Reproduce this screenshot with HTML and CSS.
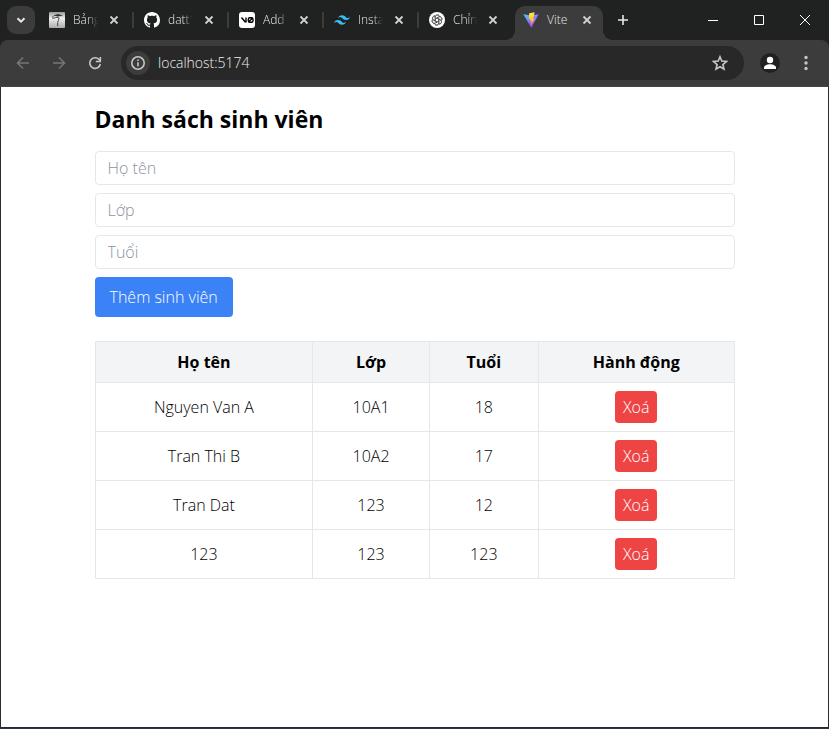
FILE: index.html
```html
<!DOCTYPE html>
<html lang="vi">
<head>
<meta charset="utf-8">
<title>Danh sách sinh viên</title>
<link rel="stylesheet" href="styles.css">
</head>
<body>
<div class="window">
  <header class="tabstrip">
    <button class="tab-search" aria-label="Search tabs"><svg width="12" height="12" viewBox="0 0 12 12"><path d="M2.500 4.200 6 7.700 9.500 4.200" fill="none" stroke="currentColor" stroke-width="2"/></svg></button>
    <nav class="tabs">
      <div class="tab">
        <svg class="favicon" viewBox="0 0 16 16"><defs><linearGradient id="paper" x2="0" y2="1"><stop stop-color="#999"/><stop offset=".4" stop-color="#eee"/><stop offset="1" stop-color="#aaa"/></linearGradient></defs><rect width="16" height="16" rx="1" fill="url(#paper)"/><path d="M4 3.500 9 2l5 1.500-5 1z" fill="#333"/><path d="M5 6.500c1.500-1.500 4-1.500 5.500 0M9.500 6.500c.6 2-.8 2.500-.8 4V14M4 4v3" fill="none" stroke="#444"/></svg>
        <span class="tab-title">Bảng</span>
        <button class="tab-close" aria-label="Close tab"><svg viewBox="0 0 16 16"><path d="m4.500 4.500 7 7m0-7-7 7"/></svg></button>
      </div>
      <div class="tab">
        <svg class="favicon" viewBox="0 0 16 16"><path fill="#fff" d="M8 0C3.580 0 0 3.580 0 8c0 3.540 2.290 6.530 5.470 7.590.4.070.55-.17.55-.38 0-.19-.01-.82-.01-1.490-2.010.37-2.530-.49-2.690-.94-.09-.23-.48-.94-.82-1.130-.28-.15-.68-.52-.01-.53.63-.01 1.080.58 1.230.82.72 1.210 1.870.87 2.330.66.07-.52.28-.87.51-1.070-1.780-.2-3.640-.89-3.640-3.950 0-.87.31-1.590.82-2.150-.08-.2-.36-1.020.08-2.120 0 0 .67-.21 2.200.82.64-.18 1.320-.27 2-.27s1.360.09 2 .27c1.530-1.040 2.200-.82 2.200-.82.44 1.100.16 1.920.08 2.120.51.56.82 1.270.82 2.150 0 3.070-1.870 3.750-3.650 3.950.29.25.54.73.54 1.480 0 1.070-.01 1.930-.01 2.200 0 .21.15.46.55.38A8 8 0 0 0 16 8c0-4.420-3.580-8-8-8z"/></svg>
        <span class="tab-title">datt1</span>
        <button class="tab-close" aria-label="Close tab"><svg viewBox="0 0 16 16"><path d="m4.500 4.500 7 7m0-7-7 7"/></svg></button>
      </div>
      <div class="tab">
        <svg class="favicon" viewBox="0 0 16 16"><rect width="16" height="16" rx="3" fill="#fff"/><path d="m2.500 5.500 3.500 4.300h1V5.500M9.800 5.800h2.700q1.500 0 1.500 1.500v1.400q0 1.500-1.500 1.500h-1.700q-1.500 0-1.500-1.500V7.300q0-1.500 1.500-1.500M9.500 10l4-4" fill="none" stroke="#000" stroke-width="1.400"/></svg>
        <span class="tab-title">Add</span>
        <button class="tab-close" aria-label="Close tab"><svg viewBox="0 0 16 16"><path d="m4.500 4.500 7 7m0-7-7 7"/></svg></button>
      </div>
      <div class="tab">
        <svg class="favicon" viewBox="0 0 24 24"><path fill="#38bdf8" d="M12 4.800c-3.200 0-5.200 1.600-6 4.800 1.200-1.600 2.600-2.200 4.200-1.800.913.228 1.565.89 2.288 1.624C13.666 10.618 15.027 12 18 12c3.200 0 5.200-1.600 6-4.800-1.200 1.600-2.600 2.200-4.200 1.800-.913-.228-1.565-.89-2.288-1.624C16.337 6.182 14.976 4.800 12 4.800zM6 12c-3.200 0-5.200 1.600-6 4.800 1.200-1.600 2.600-2.200 4.200-1.800.913.228 1.565.89 2.288 1.624C7.666 17.818 9.027 19.200 12 19.200c3.200 0 5.200-1.600 6-4.800-1.200 1.600-2.600 2.200-4.200 1.800-.913-.228-1.565-.89-2.288-1.624C10.337 13.382 8.976 12 6 12z"/></svg>
        <span class="tab-title">Insta</span>
        <button class="tab-close" aria-label="Close tab"><svg viewBox="0 0 16 16"><path d="m4.500 4.500 7 7m0-7-7 7"/></svg></button>
      </div>
      <div class="tab tab-last">
        <svg class="favicon" viewBox="0 0 16 16"><circle cx="8" cy="8" r="8" fill="#fff"/><g fill="none" stroke="#444" stroke-width=".7"><path id="knot" d="M6.200 9V5.200c0-2.700 3.600-3 4.300-.8M6.200 7 9.600 5c2.300-1.300 4.300 1.500 2.800 3.300"/><use href="#knot" transform="rotate(60 8 8)"/><use href="#knot" transform="rotate(120 8 8)"/><use href="#knot" transform="rotate(180 8 8)"/><use href="#knot" transform="rotate(240 8 8)"/><use href="#knot" transform="rotate(300 8 8)"/></g></svg>
        <span class="tab-title">Chỉn</span>
        <button class="tab-close" aria-label="Close tab"><svg viewBox="0 0 16 16"><path d="m4.500 4.500 7 7m0-7-7 7"/></svg></button>
      </div>
      <div class="tab tab-active">
        <svg class="favicon" viewBox="0 0 16 16"><defs><linearGradient id="vee" x1="0" y1="0" x2=".6" y2="1"><stop stop-color="#41d1ff"/><stop offset="1" stop-color="#bd34fe"/></linearGradient><linearGradient id="bolt" x2="0" y2="1"><stop stop-color="#ffea55"/><stop offset="1" stop-color="#ffa800"/></linearGradient></defs><path d="M.3 2.200 8 3.600l7.700-1.400L8.300 15.800z" fill="url(#vee)"/><path d="m11.500.3-5.300 1-.5 6 1.900-.4-.5 2.600 1.500-.4-.8 4 4-6.400-1.800.3 1.100-3.500z" fill="url(#bolt)"/></svg>
        <span class="tab-title">Vite</span>
        <button class="tab-close" aria-label="Close tab"><svg viewBox="0 0 16 16"><path d="m4.500 4.500 7 7m0-7-7 7"/></svg></button>
      </div>
    </nav>
    <button class="new-tab" aria-label="New tab"><svg width="12" height="12" viewBox="0 0 12 12"><path d="M6 1v10M1 6h10" stroke="currentColor" stroke-width="1.600"/></svg></button>
    <div class="window-controls">
      <button aria-label="Minimize"><svg width="10" height="10" viewBox="0 0 10 10"><path d="M0 5.500h10"/></svg></button>
      <button aria-label="Maximize"><svg width="10" height="10" viewBox="0 0 10 10"><path d="M.5.5h9v9h-9z"/></svg></button>
      <button aria-label="Close"><svg width="10" height="10" viewBox="0 0 10 10"><path d="m0 0 10 10M10 0 0 10"/></svg></button>
    </div>
  </header>

  <div class="toolbar">
    <button class="tool dim" aria-label="Back"><svg viewBox="0 0 16 16"><path d="M14 8H3m5-5.500L2.500 8 8 13.500"/></svg></button>
    <button class="tool dim" aria-label="Forward"><svg viewBox="0 0 16 16"><path d="M2 8h11M8 2.500 13.500 8 8 13.500"/></svg></button>
    <button class="tool" aria-label="Reload"><svg viewBox="0 0 16 16"><path d="M13.300 9A5.300 5.300 0 1 1 12 4.500L13.500 6"/><path d="M13.300 2v4.500H8.800"/></svg></button>
    <div class="omnibox">
      <button class="site-info" aria-label="Site information"><svg width="16" height="16" viewBox="0 0 16 16"><circle cx="8" cy="8" r="6.200"/><path d="M8 7.200v4M8 4.500v1.600"/></svg></button>
      <input class="address" aria-label="Address" value="localhost:5174">
      <button class="bookmark" aria-label="Bookmark"><svg width="16" height="16" viewBox="0 0 16 16"><path d="m8 1.800 1.800 4.300 4.700.4-3.600 3.100 1.100 4.600L8 11.800l-4 2.400 1.100-4.600-3.600-3.100 4.700-.4z"/></svg></button>
    </div>
    <button class="profile" aria-label="Profile"><svg width="20" height="20" viewBox="0 0 20 20"><circle cx="10" cy="10" r="10" fill="#202222"/><circle cx="10" cy="7" r="3.200" fill="#fff"/><path d="M4 16v-1.500c0-2 3-3.300 6-3.300s6 1.300 6 3.300V16z" fill="#fff"/></svg></button>
    <button class="menu" aria-label="Menu"><svg width="4" height="16" viewBox="0 0 4 16" fill="#c7c7c7"><circle cx="2" cy="2.500" r="1.700"/><circle cx="2" cy="8" r="1.700"/><circle cx="2" cy="13.500" r="1.700"/></svg></button>
  </div>

  <main class="page">
    <div class="container">
      <h1>Danh sách sinh viên</h1>
      <form class="student-form">
        <input type="text" placeholder="Họ tên" aria-label="Họ tên">
        <input type="text" placeholder="Lớp" aria-label="Lớp">
        <input type="text" placeholder="Tuổi" aria-label="Tuổi">
        <button type="button" class="add">Thêm sinh viên</button>
      </form>
      <table>
        <colgroup><col class="col-name"><col class="col-class"><col class="col-age"><col></colgroup>
        <thead><tr><th>Họ tên</th><th>Lớp</th><th>Tuổi</th><th>Hành động</th></tr></thead>
        <tbody>
          <tr><td>Nguyen Van A</td><td>10A1</td><td>18</td><td><button class="delete">Xoá</button></td></tr>
          <tr><td>Tran Thi B</td><td>10A2</td><td>17</td><td><button class="delete">Xoá</button></td></tr>
          <tr><td>Tran Dat</td><td>123</td><td>12</td><td><button class="delete">Xoá</button></td></tr>
          <tr><td>123</td><td>123</td><td>123</td><td><button class="delete">Xoá</button></td></tr>
        </tbody>
      </table>
    </div>
  </main>
</div>
</body>
</html>
```
FILE: styles.css
```css
* {
  box-sizing: border-box;
}

body {
  margin: 0;
  background: #202222;
  font: 300 16px/24px "Open Sans", "Noto Sans", sans-serif;
  color: #000;
}

button,
input {
  margin: 0;
  padding: 0;
  border: 0;
  background: none;
  font: inherit;
  color: inherit;
}

button {
  display: flex;
  align-items: center;
  justify-content: center;
}

.window {
  display: flex;
  flex-direction: column;
  min-height: 100vh;
  border-bottom: 1px solid #263645;
}

/* Tab strip */
.tabstrip {
  display: flex;
  align-items: center;
  height: 40px;
  padding: 0 1px 0 7px;
  background: #202222;
  color: #e8e8e8;
}

.tab-search {
  width: 28px;
  height: 28px;
  border-radius: 9px;
  background: #3c3c3c;
}

.tabs {
  display: flex;
  align-self: stretch;
  margin-left: 6px;
}

.tab {
  position: relative;
  display: flex;
  align-items: center;
  gap: 8px;
  width: 95px;
  padding: 0 14px 0 8px;
}

.tab::after {
  content: "";
  position: absolute;
  right: 2px;
  width: 2px;
  height: 16px;
  background: #3c3c3c;
}

.tab-last {
  width: 94px;
}

.tab-last::after {
  display: none;
}

.tab-active {
  width: 88px;
  margin-top: 6px;
  padding: 0 8px 6px;
  border-radius: 10px 10px 0 0;
  background: #3c3c3c;
}

.tab-active::before,
.tab-active::after {
  content: "";
  display: block;
  position: absolute;
  bottom: 0;
  width: 10px;
  height: 10px;
}

.tab-active::before {
  right: 100%;
  background: radial-gradient(circle at 0 0, transparent 10px, #3c3c3c 10px);
}

.tab-active::after {
  right: auto;
  left: 100%;
  background: radial-gradient(circle at 100% 0, transparent 10px, #3c3c3c 10px);
}

.favicon {
  flex: none;
  width: 16px;
  height: 16px;
}

.tab-title {
  flex: 1;
  min-width: 0;
  white-space: nowrap;
  font-size: 12px;
  line-height: 16px;
  mask-image: linear-gradient(to right, #000 60%, transparent);
}

.tab-active .tab-title {
  mask-image: none;
}

.tab-close {
  flex: none;
  width: 16px;
  height: 16px;
}

.tab-close svg {
  width: 16px;
  height: 16px;
  fill: none;
  stroke: #d0d0d0;
  stroke-width: 1.8;
}

.new-tab {
  width: 28px;
  height: 28px;
  margin-left: 6px;
}

.window-controls {
  display: flex;
  align-self: stretch;
  margin-left: auto;
}

.window-controls button {
  width: 46px;
}

.window-controls svg {
  fill: none;
  stroke: #fff;
}

/* Toolbar */
.toolbar {
  display: flex;
  align-items: center;
  height: 47px;
  padding: 0 9px 1px 9px;
  border-bottom: 1px solid #464646;
  border-radius: 8px 8px 0 0;
  background: #3c3c3c;
}

.tool {
  width: 28px;
  height: 28px;
  margin-right: 8px;
  color: #c7c7c7;
}

.tool.dim {
  color: #757575;
}

.tool svg {
  width: 16px;
  height: 16px;
  fill: none;
  stroke: currentColor;
  stroke-width: 1.6;
}

.omnibox {
  display: flex;
  flex: 1;
  align-items: center;
  min-width: 0;
  height: 34px;
  margin: 0 12px 0 4px;
  padding: 0 12px 0 5px;
  border-radius: 17px;
  background: #282828;
  color: #f0f0f0;
}

.site-info {
  width: 24px;
  height: 24px;
  border-radius: 12px;
  background: #3c3c3c;
}

.omnibox svg {
  fill: none;
  stroke: #c7c7c7;
  stroke-width: 1.6;
}

.address {
  flex: 1;
  min-width: 0;
  margin-left: 8px;
  font-size: 14px;
  line-height: 20px;
  outline: 0;
}

.bookmark,
.profile,
.menu {
  width: 28px;
  height: 28px;
}

.bookmark {
  width: 24px;
}

.menu {
  margin-left: 8px;
}

/* Page */
.page {
  flex: 1;
  border: solid #2b2b2b;
  border-width: 0 1px 1px;
  background: #fff;
}

.container {
  max-width: 672px;
  margin: 0 auto;
  padding: 16px;
}

h1 {
  margin: 0 0 16px;
  font-size: 23px;
  line-height: 32px;
  font-weight: 700;
}

.student-form {
  display: flex;
  flex-direction: column;
  align-items: flex-start;
  gap: 8px;
  margin-bottom: 24px;
}

.student-form input {
  width: 100%;
  height: 34px;
  padding: 0 12px;
  border: 1px solid #e5e7eb;
  border-radius: 4px;
}

.student-form input::placeholder {
  color: #8b93a1;
  opacity: 1;
}

.add {
  padding: 8px 15px;
  border-radius: 4px;
  background: #3b82f6;
  color: #fff;
}

table {
  width: 100%;
  border-collapse: collapse;
  table-layout: fixed;
  text-align: center;
}

.col-name {
  width: 34.1%;
}

.col-class {
  width: 18.2%;
}

.col-age {
  width: 17.1%;
}

th,
td {
  padding: 8px;
  border: 1px solid #e5e7eb;
}

th {
  background: #f3f4f6;
  font-weight: 700;
}

.delete {
  margin: 0 auto;
  padding: 4px 8px;
  border-radius: 4px;
  background: #ef4444;
  color: #fff;
}
```
